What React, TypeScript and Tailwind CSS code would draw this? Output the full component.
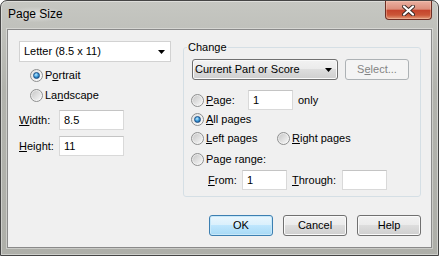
import React from "react";

function Radio({ checked = false }: { checked?: boolean }) {
  return (
    <span className="w-[13px] h-[13px] rounded-full border border-[#8e8f8f] bg-[linear-gradient(135deg,#e2e2e2,#fbfbfb)] flex items-center justify-center shrink-0">
      {checked ? (
        <span className="w-[7px] h-[7px] rounded-full bg-[radial-gradient(circle_at_40%_35%,#c4ecff_0%,#41a0de_45%,#0b3d78_100%)] border border-[#1c4f86]" />
      ) : (
        <span className="w-[9px] h-[9px] rounded-full bg-[linear-gradient(135deg,#c8c8c8,#f6f6f6)]" />
      )}
    </span>
  );
}

function RadioLabel({ checked = false, children, className = "" }: { checked?: boolean; children: React.ReactNode; className?: string }) {
  return (
    <div className={"flex items-center " + className}>
      <Radio checked={checked} />
      <span className="ml-[2px] leading-[13px]">{children}</span>
    </div>
  );
}

function TextBox({ value, w }: { value: string; w: string }) {
  return (
    <div className={"h-[20px] bg-white border border-[#d9d9d9] border-t-[#c4c4c4] flex items-center pl-[4px] leading-[13px] " + w}>
      {value}
    </div>
  );
}

function Arrow() {
  return (
    <svg width="7" height="4" viewBox="0 0 7 4" className="shrink-0">
      <path d="M0 0 H7 L3.5 4 Z" fill="#000" />
    </svg>
  );
}

function Btn({ children, def = false }: { children: React.ReactNode; def?: boolean }) {
  return (
    <div
      className={
        "w-[64px] h-[21px] rounded-[3px] border flex items-center justify-center leading-[13px] " +
        (def
          ? "border-[#3c7fb1] bg-[linear-gradient(180deg,#eaf6fd_0%,#d9f0fc_49%,#bee6fd_50%,#a7d9f5_100%)] shadow-[inset_0_0_0_1px_#c7e8f9]"
          : "border-[#707070] bg-[linear-gradient(180deg,#f2f2f2_0%,#ebebeb_49%,#dddddd_50%,#cfcfcf_100%)] shadow-[inset_0_0_0_1px_#fafafa]")
      }
    >
      {children}
    </div>
  );
}

export default function App() {
  return (
    <div className="w-[439px] h-[256px] overflow-hidden rounded-t-[7px] border border-[#454545] bg-[linear-gradient(180deg,#c6c7c2_0%,#b2b3ad_35%,#aeafa9_100%)] shadow-[inset_0_0_0_1px_rgba(255,255,255,0.4)] font-['Liberation_Sans',Arial,sans-serif] text-[11px] text-black flex flex-col">
      {/* Title bar */}
      <div className="h-[28px] flex items-start justify-between pl-[7px] pr-[6px] shrink-0">
        <span className="mt-[6px] text-[12px] leading-[15px] text-black px-[2px] -ml-[2px] rounded-full bg-[radial-gradient(ellipse_at_center,rgba(255,255,255,0.45)_0%,rgba(255,255,255,0)_75%)]">
          Page Size
        </span>
        <div className="w-[47px] h-[19px] rounded-b-[4px] border border-t-0 border-[#6e2e24] bg-[linear-gradient(180deg,#eab0a1_0%,#dc8e7b_45%,#c5442c_52%,#cb5638_78%,#e39a78_100%)] shadow-[inset_0_0_0_1px_rgba(255,220,200,0.35)] flex items-center justify-center">
          <svg width="13" height="11" viewBox="0 0 13 11">
            <path d="M2 1.5 L11 9.5 M11 1.5 L2 9.5" stroke="#3a2a26" strokeWidth="4" strokeLinecap="round" />
            <path d="M2 1.5 L11 9.5 M11 1.5 L2 9.5" stroke="#ffffff" strokeWidth="2.2" strokeLinecap="round" />
          </svg>
        </div>
      </div>

      {/* Client area */}
      <div className="mx-[6px] h-[219px] border border-[#8a8a8a] bg-[#f0f0f0] shadow-[0_0_0_1px_rgba(255,255,255,0.35)] pt-[11px] pl-[11px] pr-[10px] flex flex-col">
        <div className="flex items-start">
          {/* Left column */}
          <div className="w-[152px] flex flex-col">
            <div className="h-[21px] bg-white border border-[#d2d2d2] flex items-center justify-between pl-[4px] pr-[5px] leading-[13px]">
              <span>Letter (8.5 x 11)</span>
              <Arrow />
            </div>
            <div className="pl-[11px] mt-[3px]">
              <RadioLabel checked className="h-[20px]">
                P<u>o</u>rtrait
              </RadioLabel>
              <RadioLabel className="h-[20px]">
                La<u>n</u>dscape
              </RadioLabel>
            </div>
            <div className="flex items-center mt-[5px] h-[20px]">
              <span className="w-[40px] leading-[13px]">
                <u>W</u>idth:
              </span>
              <TextBox value="8.5" w="w-[65px]" />
            </div>
            <div className="flex items-center mt-[6px] h-[20px]">
              <span className="w-[40px] leading-[13px]">
                <u>H</u>eight:
              </span>
              <TextBox value="11" w="w-[65px]" />
            </div>
          </div>

          {/* Change group */}
          <fieldset className="ml-[12px] w-[238px] border border-[#d5dfe5] rounded-[3px] p-0 m-0">
            <legend className="ml-[3px] px-[1px] leading-[13px]">Change</legend>
            <div className="pl-[7px] pb-[6px]">
              <div className="flex items-center mt-[5px]">
                <div className="ml-[1px] w-[146px] h-[21px] rounded-[3px] border border-[#707070] bg-[linear-gradient(180deg,#f2f2f2_0%,#ebebeb_49%,#dddddd_50%,#cfcfcf_100%)] shadow-[inset_0_0_0_1px_#fafafa] flex items-center justify-between pl-[2px] pr-[5px] leading-[13px]">
                  <span>Current Part or Score</span>
                  <Arrow />
                </div>
                <div className="ml-[7px] w-[64px] h-[21px] rounded-[3px] border border-[#adb2b5] bg-[#f4f4f4] text-[#838383] flex items-center justify-center leading-[13px]">
                  S<u>e</u>lect...
                </div>
              </div>
              <div className="flex items-center mt-[10px] h-[20px]">
                <Radio />
                <span className="ml-[2px] w-[42px] leading-[13px]">
                  <u>P</u>age:
                </span>
                <TextBox value="1" w="w-[45px]" />
                <span className="ml-[5px] leading-[13px]">only</span>
              </div>
              <RadioLabel checked className="h-[18px]">
                <u>A</u>ll pages
              </RadioLabel>
              <div className="flex items-center h-[21px]">
                <RadioLabel className="w-[86px]">
                  <u>L</u>eft pages
                </RadioLabel>
                <RadioLabel>
                  <u>R</u>ight pages
                </RadioLabel>
              </div>
              <RadioLabel className="h-[20px]">Page range:</RadioLabel>
              <div className="flex items-center mt-[1px] h-[20px] pl-[17px]">
                <span className="w-[34px] leading-[13px]">
                  <u>F</u>rom:
                </span>
                <TextBox value="1" w="w-[45px]" />
                <span className="ml-[5px] w-[50px] leading-[13px]">
                  <u>T</u>hrough:
                </span>
                <TextBox value="" w="w-[45px]" />
              </div>
            </div>
          </fieldset>
        </div>

        {/* Buttons */}
        <div className="flex justify-end gap-[10px] mt-[18px]">
          <Btn def>OK</Btn>
          <Btn>Cancel</Btn>
          <Btn>Help</Btn>
        </div>
      </div>
    </div>
  );
}
